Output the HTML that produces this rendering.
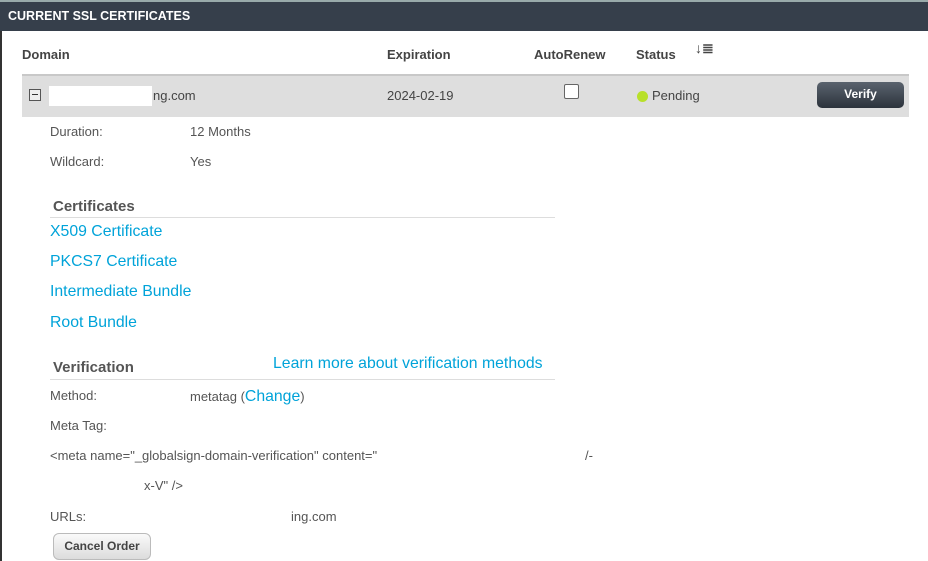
<!DOCTYPE html>
<html><head><style>
body{margin:0;width:928px;height:561px;overflow:hidden;background:#fff;font-family:"Liberation Sans",sans-serif;position:relative}
.a{position:absolute;white-space:nowrap}
.g{color:#555;font-size:13px}
.l{color:#00a3d9;font-size:15.8px}
.h{color:#555;font-size:15px;font-weight:bold}
</style></head><body>
<div class="a" style="left:0;top:0;width:2px;height:561px;background:#333"></div>
<div class="a" style="left:0;top:0;width:928px;height:31px;background:#363f4b;border-top:2px solid #9aa;box-sizing:border-box"></div>
<div class="a" style="left:8px;top:9px;color:#fff;font-size:12.5px;font-weight:bold">CURRENT SSL CERTIFICATES</div>
<div class="a g" style="left:22px;top:47px;font-weight:bold;color:#444">Domain</div>
<div class="a g" style="left:387px;top:47px;font-weight:bold;color:#444">Expiration</div>
<div class="a g" style="left:534px;top:47px;font-weight:bold;color:#444">AutoRenew</div>
<div class="a g" style="left:636px;top:47px;font-weight:bold;color:#444">Status</div>
<div class="a" style="left:695px;top:40px;color:#444;font-size:14px;font-weight:bold">↓≣</div>
<div class="a" style="left:22px;top:74px;width:887px;height:43px;background:#dedede;border-top:2px solid #c8c8c8;box-sizing:border-box"></div>
<div class="a" style="left:29px;top:89px;width:12px;height:12px;border:1px solid #555;background:#eee;box-sizing:border-box"><div style="position:absolute;left:2px;top:4px;width:6px;height:1px;background:#333"></div></div>
<div class="a" style="left:49px;top:86px;width:103px;height:20px;background:#fff"></div>
<div class="a g" style="left:153px;top:88px;color:#444">ng.com</div>
<div class="a g" style="left:387px;top:88px;color:#444">2024-02-19</div>
<div class="a" style="left:564px;top:84px;width:13px;height:13px;border:1px solid #666;border-radius:2px;background:#fff"></div>
<div class="a" style="left:637px;top:91px;width:11px;height:11px;border-radius:50%;background:#b8e02a"></div>
<div class="a g" style="left:652px;top:88px;color:#444">Pending</div>
<div class="a" style="left:817px;top:82px;width:87px;height:26px;border-radius:5px;background:linear-gradient(#5a636e,#2c333c);color:#fff;font-size:12px;font-weight:bold;text-align:center;line-height:25px">Verify</div>
<div class="a g" style="left:50px;top:124px">Duration:</div>
<div class="a g" style="left:190px;top:124px">12 Months</div>
<div class="a g" style="left:50px;top:154px">Wildcard:</div>
<div class="a g" style="left:190px;top:154px">Yes</div>
<div class="a h" style="left:53px;top:198px">Certificates</div>
<div class="a" style="left:50px;top:217px;width:505px;height:1px;background:#ddd"></div>
<div class="a l" style="left:50px;top:223px">X509 Certificate</div>
<div class="a l" style="left:50px;top:253px">PKCS7 Certificate</div>
<div class="a l" style="left:50px;top:283px">Intermediate Bundle</div>
<div class="a l" style="left:50px;top:314px">Root Bundle</div>
<div class="a h" style="left:53px;top:359px">Verification</div>
<div class="a l" style="left:273px;top:355px">Learn more about verification methods</div>
<div class="a" style="left:50px;top:379px;width:505px;height:1px;background:#ddd"></div>
<div class="a g" style="left:50px;top:388px">Method:</div>
<div class="a g" style="left:190px;top:388px">metatag (<span class="l">Change</span>)</div>
<div class="a g" style="left:50px;top:418px">Meta Tag:</div>
<div class="a g" style="left:50px;top:448px">&lt;meta name="_globalsign-domain-verification" content="</div>
<div class="a g" style="left:585px;top:448px">/-</div>
<div class="a g" style="left:144px;top:478px">x-V" /&gt;</div>
<div class="a g" style="left:50px;top:509px">URLs:</div>
<div class="a g" style="left:291px;top:509px">ing.com</div>
<div class="a" style="left:53px;top:533px;width:98px;height:27px;border-radius:6px;border:1px solid #bbb;box-sizing:border-box;background:linear-gradient(#fafafa,#dcdcdc);color:#444;font-size:12px;font-weight:bold;text-align:center;line-height:25px">Cancel Order</div>
</body></html>
